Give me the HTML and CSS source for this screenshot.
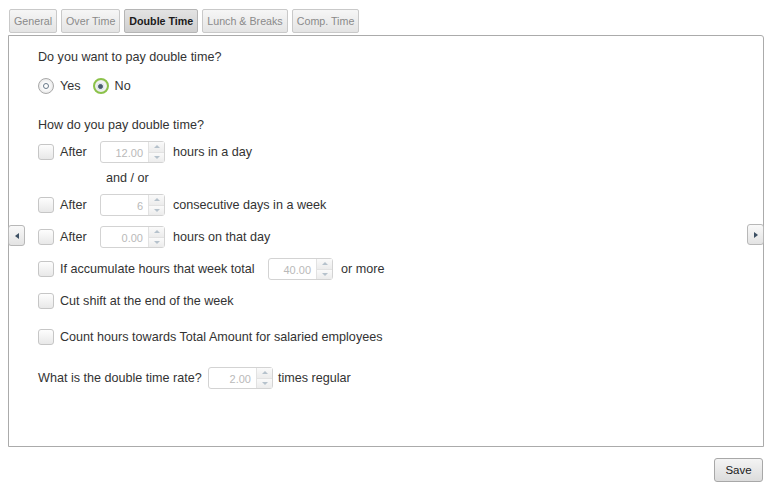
FILE: index.html
```html
<!DOCTYPE html>
<html>
<head>
<meta charset="utf-8">
<link rel="stylesheet" href="styles.css">
</head>
<body>
<div class="page">
  <div class="tabs">
    <div class="tab">General</div>
    <div class="tab">Over Time</div>
    <div class="tab active">Double Time</div>
    <div class="tab">Lunch &amp; Breaks</div>
    <div class="tab">Comp. Time</div>
  </div>
  <div class="panel">
    <button class="nav nav-left"><span class="tri-left"></span></button>
    <button class="nav nav-right"><span class="tri-right"></span></button>
    <div class="line q1">Do you want to pay double time?</div>
    <div class="radios">
      <label class="radio"><span class="rb"><span class="dot"></span></span>Yes</label>
      <label class="radio"><span class="rb on"><span class="dot"></span></span>No</label>
    </div>
    <div class="line q2">How do you pay double time?</div>

    <div class="row">
      <span class="cb"></span><span class="lbl after">After</span>
      <span class="spin"><span class="val">12.00</span><span class="arrows"><span class="up"></span><span class="down"></span></span></span>
      <span class="lbl tail">hours in a day</span>
    </div>
    <div class="andor">and / or</div>
    <div class="row">
      <span class="cb"></span><span class="lbl after">After</span>
      <span class="spin"><span class="val">6</span><span class="arrows"><span class="up"></span><span class="down"></span></span></span>
      <span class="lbl tail">consecutive days in a week</span>
    </div>
    <div class="row">
      <span class="cb"></span><span class="lbl after">After</span>
      <span class="spin"><span class="val">0.00</span><span class="arrows"><span class="up"></span><span class="down"></span></span></span>
      <span class="lbl tail">hours on that day</span>
    </div>
    <div class="row">
      <span class="cb"></span><span class="lbl accum">If accumulate hours that week total</span>
      <span class="spin"><span class="val">40.00</span><span class="arrows"><span class="up"></span><span class="down"></span></span></span>
      <span class="lbl tail">or more</span>
    </div>
    <div class="row">
      <span class="cb"></span><span class="lbl">Cut shift at the end of the week</span>
    </div>
    <div class="row r6">
      <span class="cb"></span><span class="lbl">Count hours towards Total Amount for salaried employees</span>
    </div>
    <div class="row r7">
      <span class="lbl rate">What is the double time rate?</span>
      <span class="spin"><span class="val">2.00</span><span class="arrows"><span class="up"></span><span class="down"></span></span></span>
      <span class="lbl tail2">times regular</span>
    </div>
  </div>
  <div class="footer">
    <button class="save">Save</button>
  </div>
</div>
</body>
</html>
```
FILE: styles.css
```css
* { box-sizing: border-box; }
html, body { margin: 0; padding: 0; background: #fff; }
body { font-family: "Liberation Sans", Arial, sans-serif; color: #333; font-size: 12.6px; }
.page { padding: 9px 7px 0 8px; width: 770px; }

.tabs { display: flex; gap: 4px; padding-left: 1px; height: 24px; }
.tab {
  height: 24px; padding: 0 4px; line-height: 22px; font-size: 10.7px; color: #8a8a8a;
  border: 1px solid #c9c9c9; border-radius: 2px;
  background: linear-gradient(#f6f6f6, #e4e4e4);
}
.tab.active { color: #1a1a1a; font-weight: bold; background: linear-gradient(#e3e3e3, #cfcfcf); border-color: #b5b5b5; }

.panel {
  position: relative; margin-top: 2px; height: 412px; width: 756px;
  border: 1px solid #ababab; border-radius: 0 3px 0 0;
  padding: 13px 0 0 29px;
}
.nav {
  position: absolute; width: 17px; height: 21px; top: 189px; padding: 0;
  border: 1px solid #b8b8b8; border-radius: 3px;
  background: linear-gradient(#f9f9f9, #e3e3e3);
}
.nav-left { left: -1px; }
.nav-right { right: -1px; top: 188px; }
.tri-left, .tri-right { display: block; width: 0; height: 0; margin: 0 auto; border-top: 3.5px solid transparent; border-bottom: 3.5px solid transparent; }
.tri-left { border-right: 4px solid #3c4f63; }
.tri-right { border-left: 4px solid #3c4f63; }

.line { height: 16px; line-height: 16px; }
.radios { display: flex; gap: 12px; margin-top: 10px; height: 22px; align-items: center; }
.radio { display: flex; align-items: center; gap: 6px; }
.rb {
  width: 16px; height: 16px; border-radius: 50%; border: 1px solid #a9a9a9;
  background: radial-gradient(circle, #fafafa 40%, #dcdcdc);
  display: flex; align-items: center; justify-content: center;
}
.rb .dot { width: 6px; height: 6px; border-radius: 50%; border: 1.5px solid #6a7a8a; background: #fff; }
.rb.on { border: 2px solid #8cc24a; }
.rb.on .dot { background: #4a5c6e; border-color: #4a5c6e; width: 5px; height: 5px; box-shadow: 0 0 0 1.5px #dfe6ea; }
.q2 { margin-top: 20px; }

.row { display: flex; align-items: center; height: 22px; margin-top: 10px; }
.q2 + .row { margin-top: 8px; }
.cb {
  width: 16px; height: 16px; border: 1px solid #c6c6c6; border-radius: 3px; flex: none;
  background: linear-gradient(#fdfdfd, #e8e8e8);
}
.lbl { margin-left: 6px; white-space: nowrap; }
.after { width: 40px; }
.accum { width: 208px; }
.tail { margin-left: 8px; }
.tail2 { margin-left: 5px; }
.rate { margin-left: 0; width: 170px; }
.andor { height: 16px; line-height: 16px; margin: 7px 0 0 68px; }
.andor + .row { margin-top: 8px; }
.r6 { margin-top: 14px; }
.r7 { margin-top: 19px; }

.spin {
  display: flex; width: 65px; height: 22px; border: 1px solid #d3d3d3; border-radius: 3px;
  background: #fff; flex: none;
}
.spin .val { flex: 1; text-align: right; padding-right: 5px; font-size: 11px; color: #b9b9b9; line-height: 20px; padding-top: 1px; }
.arrows { width: 16px; display: flex; flex-direction: column; border-left: 1px solid #e2e2e2; }
.arrows span { flex: 1; display: flex; align-items: center; justify-content: center; background: linear-gradient(#fafafa, #ececec); }
.arrows .up { border-bottom: 1px solid #e2e2e2; }
.arrows .up::after { content: ""; border-left: 3px solid transparent; border-right: 3px solid transparent; border-bottom: 3px solid #b6c2cc; }
.arrows .down::after { content: ""; border-left: 3px solid transparent; border-right: 3px solid transparent; border-top: 3px solid #b6c2cc; }

.footer { display: flex; justify-content: flex-end; padding-top: 11px; }
.save {
  width: 49px; height: 24px; font-family: "Liberation Sans", Arial, sans-serif;
  font-size: 11.5px; color: #1a1a1a; border: 1px solid #a8a8a8; border-radius: 3px;
  background: linear-gradient(#f4f4f4, #dcdcdc); padding: 0;
}
```
